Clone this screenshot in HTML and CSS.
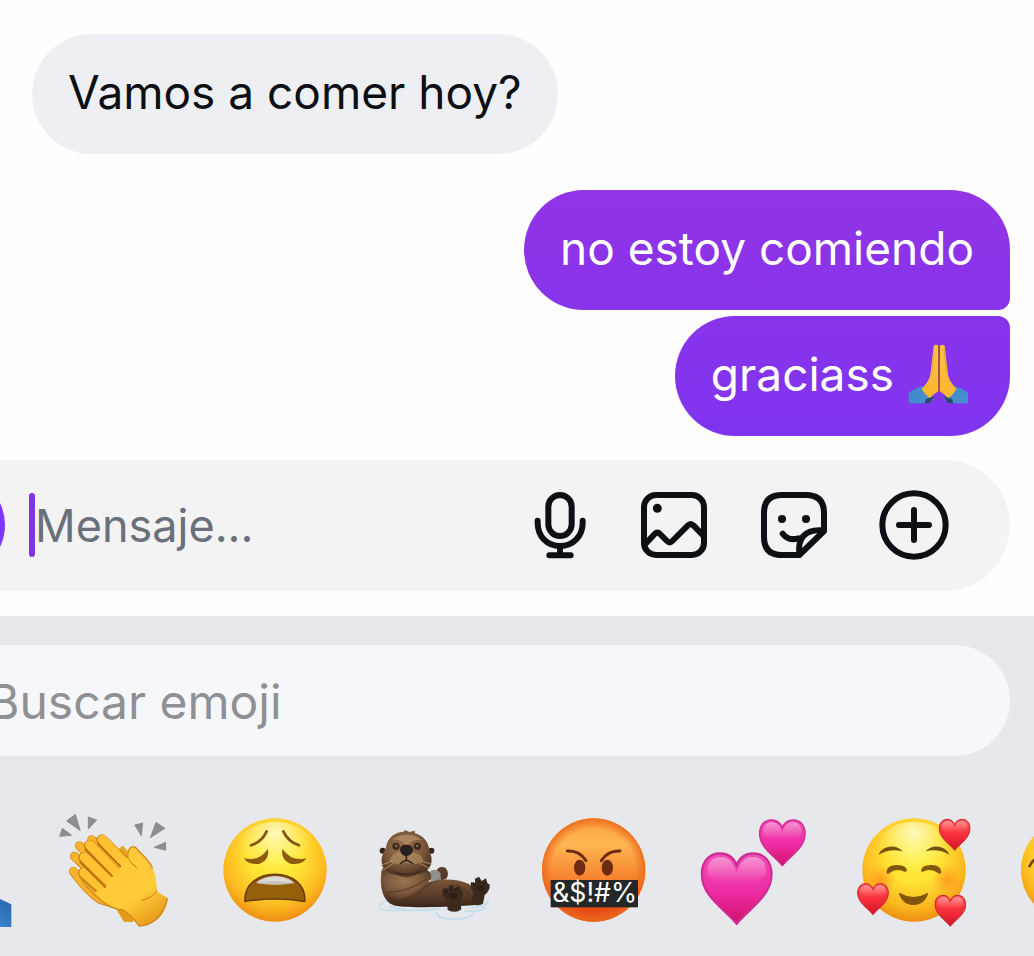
FILE: index.html
```html
<!DOCTYPE html>
<html lang="es">
<head>
<meta charset="utf-8">
<meta name="viewport" content="width=device-width, initial-scale=1">
<title>Chat</title>
<link rel="stylesheet" href="styles.css">
</head>
<body>
<svg class="defs" aria-hidden="true">
  <defs>
    <radialGradient id="face" cx=".5" cy=".36" r=".66">
      <stop offset="0" stop-color="#fff03e"/><stop offset=".4" stop-color="#ffe234"/><stop offset=".75" stop-color="#fcb920"/><stop offset="1" stop-color="#ed8710"/>
    </radialGradient>
    <radialGradient id="shine" cx=".5" cy=".12" r=".4">
      <stop offset="0" stop-color="#fffde0" stop-opacity=".8"/><stop offset="1" stop-color="#fff9a0" stop-opacity="0"/>
    </radialGradient>
    <linearGradient id="rage" x1="0" y1="0" x2="0" y2="1">
      <stop offset="0" stop-color="#fba03c"/><stop offset=".25" stop-color="#fdb653"/><stop offset=".6" stop-color="#f6802b"/><stop offset=".85" stop-color="#e84a16"/><stop offset="1" stop-color="#e5521a"/>
    </linearGradient>
    <radialGradient id="rage-rim" cx=".5" cy=".5" r=".5">
      <stop offset=".8" stop-color="#ee6a1c" stop-opacity="0"/><stop offset="1" stop-color="#ec6a1e" stop-opacity=".9"/>
    </radialGradient>
    <radialGradient id="cheek"><stop offset="0" stop-color="#ff8a1c" stop-opacity=".7"/><stop offset="1" stop-color="#ff9a1c" stop-opacity="0"/></radialGradient>
    <linearGradient id="pink" x1="0" y1="0" x2="0" y2="1">
      <stop offset="0" stop-color="#f24fb6"/><stop offset=".55" stop-color="#ee2ba4"/><stop offset="1" stop-color="#cf1268"/>
    </linearGradient>
    <linearGradient id="red" x1="0" y1="0" x2="0" y2="1">
      <stop offset="0" stop-color="#ff5050"/><stop offset=".5" stop-color="#f92f3d"/><stop offset="1" stop-color="#cc1524"/>
    </linearGradient>
    <linearGradient id="gloss" x1="0" y1="0" x2="0" y2="1">
      <stop offset="0" stop-color="#fff" stop-opacity=".4"/><stop offset="1" stop-color="#fff" stop-opacity="0"/>
    </linearGradient>
    <linearGradient id="hand" gradientUnits="userSpaceOnUse" x1="290" y1="150" x2="450" y2="380">
      <stop offset="0" stop-color="#ffc536"/><stop offset=".65" stop-color="#ffcc38"/><stop offset="1" stop-color="#e6981c"/>
    </linearGradient>
    <linearGradient id="palm" x1="0" y1="0" x2="0" y2="1">
      <stop offset="0" stop-color="#fbc04a"/><stop offset="1" stop-color="#fdb52c"/>
    </linearGradient>
    <linearGradient id="sleeve" x1="0" y1="0" x2="1" y2="1">
      <stop offset="0" stop-color="#3f86c8"/><stop offset="1" stop-color="#4793cf"/>
    </linearGradient>
    <linearGradient id="cuff" x1="1" y1="0" x2="0" y2="1">
      <stop offset="0" stop-color="#1f5cab"/><stop offset="1" stop-color="#4a9be0"/>
    </linearGradient>
    <radialGradient id="fur" cx=".45" cy=".4" r=".65">
      <stop offset="0" stop-color="#9b7450"/><stop offset=".6" stop-color="#7a573b"/><stop offset="1" stop-color="#4a3121"/>
    </radialGradient>
    <linearGradient id="belly" x1="0" y1="0" x2="0" y2="1">
      <stop offset="0" stop-color="#8b6242"/><stop offset=".6" stop-color="#64432d"/><stop offset="1" stop-color="#38251a"/>
    </linearGradient>
    <symbol id="heart-shape" viewBox="0 0 100 100">
      <path d="M50 99C37 81 2 62 2 31C2 12 13 2 27 2C38 2 46 8 50 18C54 8 62 2 73 2C87 2 98 12 98 31C98 62 63 81 50 99Z"/>
    </symbol>
    <symbol id="heart-gloss" viewBox="0 0 100 100">
      <path fill="url(#gloss)" d="M10 31C8 14 17 7 28 7C39 7 46 15 50 28C54 15 61 7 72 7C83 7 92 14 90 31C84 40 68 45 50 43C32 45 16 40 10 31Z"/>
    </symbol>
  </defs>
</svg>

<main class="chat">
  <section class="thread" aria-label="Conversación">
    <p class="bubble bubble-in">Vamos a comer hoy?</p>
    <div class="sent">
      <p class="bubble bubble-out bubble-first">no estoy comiendo</p>
      <p class="bubble bubble-out bubble-last">graciass
        <svg class="inline-emoji" viewBox="50 42 180 180" role="img" aria-label="Manos juntas">
          <path fill="url(#sleeve)" d="M52 188C64 180 78 174 94 168L128 206L118 220H52Z"/>
          <path fill="url(#sleeve)" d="M231 188C219 180 206 174 190 168L158 206L168 220H231Z"/>
          <path fill="#31436f" d="M104 207L129 199L117 220H100ZM182 207L157 199L169 220H186Z"/>
          <path fill="url(#palm)" d="M127 47Q134 42 141 47V184C134 188 126 194 115 204Q100 194 91 177C106 160 113 150 117 134Z"/>
          <path fill="url(#palm)" d="M146 47Q153 42 160 47L170 134C174 150 181 160 196 177Q187 194 171 204C160 194 152 188 146 184Z"/>
          <path fill="none" stroke="#a4560c" stroke-width="4" d="M143.500 48V185"/>
          <path fill="none" stroke="#e59a20" stroke-width="2" d="M129 55L121 134M158 55L166 134"/>
        </svg>
      </p>
    </div>
  </section>

  <form class="composer">
    <button class="camera" type="button" aria-label="Cámara"></button>
    <span class="caret"></span>
    <input class="message" type="text" placeholder="Mensaje..." aria-label="Mensaje">
    <div class="tools">
      <button class="tool" type="button" aria-label="Grabar audio">
        <svg viewBox="-6 58 216 216" fill="none" stroke="#0c1014" stroke-width="18" stroke-linecap="round">
          <rect x="85" y="76" width="70" height="123" rx="35"/>
          <path d="M53 153V160C53 201 82 229 120 229S188 201 188 160V153M120 231V254M88 257H152"/>
        </svg>
      </button>
      <button class="tool" type="button" aria-label="Enviar foto">
        <svg viewBox="354 58 216 216" fill="none" stroke="#0c1014" stroke-width="18" stroke-linejoin="round">
          <rect x="372" y="76" width="180" height="180" rx="36"/>
          <circle cx="412" cy="116" r="13.500" fill="#0c1014" stroke="none"/>
          <path d="M376 223L404 193Q412 185 420 193L441 214Q449 222 457 214L503 168Q512 159 521 168L550 198"/>
        </svg>
      </button>
      <button class="tool" type="button" aria-label="Stickers">
        <svg viewBox="54 58 216 216" fill="none" stroke="#0c1014" stroke-width="18" stroke-linejoin="round" stroke-linecap="round">
          <path d="M178 256H126Q72 256 72 202V130Q72 76 126 76H198Q252 76 252 130V184Z"/>
          <path d="M178 253C173 211 190 177 249 182"/>
          <path d="M128 192C139 208 157 211 175 206"/>
          <circle cx="126" cy="148" r="12" fill="#0c1014" stroke="none"/>
          <circle cx="198" cy="148" r="12" fill="#0c1014" stroke="none"/>
        </svg>
      </button>
      <button class="tool" type="button" aria-label="Más opciones">
        <svg viewBox="414 58 216 216" fill="none" stroke="#0c1014" stroke-width="18" stroke-linecap="round">
          <circle cx="522" cy="166" r="95"/>
          <path d="M522 121V211M477 166H567"/>
        </svg>
      </button>
    </div>
  </form>

  <section class="keyboard" aria-label="Teclado de emojis">
    <input class="search" type="search" placeholder="Buscar emoji" aria-label="Buscar emoji">
    <div class="emojis">
      <button class="emoji" type="button" aria-label="Manos juntas">
        <svg viewBox="-315 33 360 360">
          <path fill="url(#cuff)" d="M-308 315L-225 270L-170 345L-190 381H-308Z"/>
          <path fill="url(#cuff)" d="M34 313L0 297L-49 270L-104 345L-84 381H34Z"/>
          <path fill="url(#palm)" d="M-164 52Q-152 42 -140 52V320L-190 350L-240 300Q-196 240 -190 190ZM-134 52Q-122 42 -110 52L-84 190Q-78 240 -34 300L-84 350L-134 320Z"/>
        </svg>
      </button>
      <button class="emoji" type="button" aria-label="Aplauso">
        <svg viewBox="165 33 360 360">
          <g fill="#8d8e90" stroke="#7b7c80" stroke-width="2">
            <path d="M200 63L226 43L241 92ZM265 51L290 60L265 87ZM187 85L215 106L179 109ZM404 75L428 69L424 107ZM468 67L495 85L451 113ZM497 127V151L462 142Z"/>
          </g>
          <path fill="#e59a18" d="M345 322L372 365L398 367L410 340Z"/>
          <path fill="#eba321" d="M358 160Q354 140 370 138L392 165L400 240Z"/>
          <g fill="none" stroke-linecap="round">
            <g stroke="#cf8516" stroke-width="27">
              <path d="M275 119L380 230M238 137L360 260M223 169L350 290M220 214Q262 272 300 298L345 312"/>
            </g>
            <g stroke="#f8b22c" stroke-width="23">
              <path d="M275 119L380 230M238 137L370 270M223 169L360 290M220 214Q262 272 300 297L345 310"/>
            </g>
            <path stroke="#c57d14" stroke-width="34" d="M251 219L330 296"/>
            <path stroke="#ffc233" stroke-width="29" d="M252 218L340 296"/>
            <path stroke="#c57d14" stroke-width="34" d="M252 173L330 248"/>
            <path stroke="#ffc233" stroke-width="29" d="M253 172L350 266"/>
            <path stroke="#c57d14" stroke-width="34" d="M269 136L345 216"/>
            <path stroke="#ffc233" stroke-width="29" d="M270 135L370 240"/>
            <path stroke="#c57d14" stroke-width="34" d="M306 120L370 184"/>
            <path stroke="#ffc233" stroke-width="29" d="M307 119L390 205"/>
          </g>
          <path fill="url(#hand)" d="M314 262L338 228L362 200L382 174C379 149 391 134 407 141C420 158 449 181 457 204C469 226 468 250 473 276L503 294C500 340 468 375 418 379C400 363 388 342 369 330C340 326 308 308 285 276Z"/>
          <path fill="none" stroke="#c57d14" stroke-width="3" d="M385 176Q391 190 412 204M470 274Q454 294 424 302"/>
          <g fill="none" stroke="#b96d0d" stroke-width="5" stroke-linecap="round">
            <path d="M294 132L361 199M256 149L336 228M240 186L316 262"/>
          </g>
          <path fill="none" stroke="#d18b1a" stroke-width="4" stroke-linecap="round" d="M240 232C276 283 322 327 369 330Q391 342 418 378Q481 374 502 297M384 174C381 148 392 135 407 142C421 160 450 182 457 204"/>
        </svg>
      </button>
      <button class="emoji" type="button" aria-label="Cara agotada">
        <svg viewBox="15 33 360 360">
          <circle cx="195" cy="210" r="155" fill="url(#face)"/>
          <circle cx="195" cy="210" r="145" fill="url(#shine)"/>
          <path fill="none" stroke="#80500c" stroke-width="8" stroke-linecap="round" d="M123 136Q155 126 170 94M267 136Q235 126 220 94"/>
          <path fill="#8f5b10" d="M102 175Q148 185 173 147C181 170 160 194 136 192Q112 192 102 175ZM289 175Q243 185 218 147C210 170 231 194 255 192Q279 192 289 175Z"/>
          <path fill="#946009" stroke="#6d3d0d" stroke-width="5" stroke-linejoin="round" d="M105 304C102 255 143 223 195 223S288 255 284 304Q195 290 105 304Z"/>
          <path fill="#dedad6" d="M138 249C165 222 226 222 253 249Q195 260 138 249Z"/>
          <path fill="#b9aa9a" opacity=".5" d="M138 249Q195 238 253 249Q195 262 138 249Z"/>
        </svg>
      </button>
      <button class="emoji" type="button" aria-label="Nutria">
        <svg viewBox="30 3 360 360">
          <g fill="none" stroke="#c6dfea" stroke-width="6" stroke-linecap="round">
            <path d="M60 274Q38 284 46 294T100 301H205M215 309Q218 326 260 328T325 312M72 289Q130 307 225 296M320 292Q365 290 370 274M300 303Q345 307 360 294"/>
          </g>
          <path fill="url(#belly)" d="M50 181C40 244 62 281 90 287C140 295 270 291 327 285L342 262L312 222C270 202 220 207 185 217L176 176Z"/>
          <path fill="#5a3b28" d="M215 181Q224 166 242 174Q256 192 242 208L212 214Z"/>
          <path fill="#8e908f" d="M190 188Q210 171 226 188L228 211L199 216Z"/>
          <path fill="url(#fur)" d="M52 175C42 226 67 261 98 271C142 257 173 232 198 207Q202 191 187 180Z"/>
          <circle cx="53" cy="122" r="9" fill="#33241c"/><circle cx="199" cy="122" r="9" fill="#33241c"/>
          <path fill="url(#fur)" d="M63 112C67 80 94 65 116 65L120 60L133 66L149 62L150 70C180 78 192 102 194 126C210 159 193 190 151 193C105 199 52 198 50 155C48 139 57 128 63 112Z"/>
          <path fill="#c09a6e" opacity=".6" d="M83 89C99 72 145 66 171 91C151 88 139 93 127 106Q105 86 83 89Z"/>
          <path fill="#c09c70" opacity=".5" d="M121 130C95 120 78 137 74 151C83 166 107 162 122 158C137 164 166 166 175 151C172 134 149 123 121 130Z"/>
          <circle cx="93" cy="109" r="11" fill="#3e2b1c"/><circle cx="157" cy="109" r="11" fill="#3e2b1c"/>
          <circle cx="94" cy="108" r="4" fill="#866a48"/><circle cx="156" cy="108" r="4" fill="#866a48"/>
          <path fill="#28201d" d="M105 119Q105 104 124 104T144 119Q143 134 126 138H120Q106 132 105 119Z"/>
          <path fill="none" stroke="#37251a" stroke-width="5" stroke-linecap="round" d="M124 137V149M106 161Q118 151 124 151T143 161"/>
          <path fill="#3a271c" opacity=".65" d="M82 181Q125 199 169 181Q145 209 105 199Z"/>
          <path fill="none" stroke="#d1b08a" stroke-width="2" d="M82 153L47 166M85 160L53 181M166 153L204 163M164 160L197 177"/>
          <path fill="none" stroke="#452d1f" stroke-width="5" opacity=".5" d="M67 246Q130 248 186 206M156 254Q184 220 225 210M270 225Q305 230 315 266"/>
          <g fill="#3c291e">
            <path d="M248 300L246 272C229 260 228 241 239 232L251 237L252 226L265 225L268 235L281 228L292 243Q298 256 286 274L289 298Q272 312 248 300ZM319 281L325 247Q311 230 319 216L330 218V206L342 200L350 213L363 205L367 219L374 224Q376 241 359 255L354 281Q337 290 319 281Z"/>
          </g>
          <g fill="#2a1e17">
            <ellipse cx="265" cy="257" rx="12" ry="9"/><ellipse cx="347" cy="235" rx="12" ry="9"/>
            <circle cx="245" cy="244" r="4"/><circle cx="258" cy="237" r="4"/><circle cx="273" cy="239" r="4"/><circle cx="328" cy="224" r="4"/><circle cx="342" cy="215" r="4"/><circle cx="360" cy="219" r="4"/>
          </g>
        </svg>
      </button>
      <button class="emoji" type="button" aria-label="Cara maldiciendo">
        <svg viewBox="15 33 360 360">
          <circle cx="191" cy="210" r="155" fill="url(#rage)"/>
          <circle cx="191" cy="210" r="155" fill="url(#rage-rim)"/>
          <ellipse cx="149" cy="203" rx="17" ry="24" fill="#6c2c14"/><ellipse cx="232" cy="203" rx="17" ry="24" fill="#6c2c14"/>
          <path fill="none" stroke="#702a10" stroke-width="9" stroke-linecap="round" d="M112 153Q148 151 168 182M270 153Q234 151 214 182"/>
          <rect x="62" y="240" width="262" height="82" fill="#242727"/>
          <text class="swear" x="194" y="306" text-anchor="middle">&amp;$!#%</text>
        </svg>
      </button>
      <button class="emoji" type="button" aria-label="Dos corazones">
        <svg viewBox="15 33 360 360">
          <g fill="url(#pink)" stroke="#cf2b94" stroke-width="3">
            <use href="#heart-shape" x="31" y="155" width="218" height="220"/>
            <use href="#heart-shape" x="206" y="57" width="142" height="142"/>
          </g>
          <use href="#heart-gloss" x="31" y="155" width="218" height="220"/>
          <use href="#heart-gloss" x="206" y="57" width="142" height="142"/>
        </svg>
      </button>
      <button class="emoji" type="button" aria-label="Cara con corazones">
        <svg viewBox="30 33 360 360">
          <circle cx="207" cy="210" r="155" fill="url(#face)"/>
          <circle cx="207" cy="210" r="145" fill="url(#shine)"/>
          <circle cx="107" cy="240" r="46" fill="url(#cheek)"/><circle cx="307" cy="240" r="46" fill="url(#cheek)"/>
          <path fill="#77500f" d="M101 164C112 137 154 131 173 154Q135 145 101 164ZM313 164C302 137 261 131 242 154Q280 145 313 164Z"/>
          <path fill="#83570e" d="M124 218Q124 195 155 195T186 213Q180 218 172 212Q151 205 134 219Q128 224 124 218ZM228 213Q228 195 259 195T289 218Q285 224 279 219Q260 205 240 212Q233 218 228 213Z"/>
          <path fill="#83550d" d="M162 281Q163 276 169 281Q206 301 243 281Q249 276 249 282C242 303 227 315 206 315S169 303 162 281Z"/>
          <g fill="url(#red)" stroke="#c41f30" stroke-width="3">
            <use href="#heart-shape" x="36" y="248" width="96" height="98"/>
            <use href="#heart-shape" x="268" y="283" width="96" height="98"/>
            <use href="#heart-shape" x="281" y="55" width="96" height="98"/>
          </g>
          <use href="#heart-gloss" x="36" y="248" width="96" height="98"/>
          <use href="#heart-gloss" x="268" y="283" width="96" height="98"/>
          <use href="#heart-gloss" x="281" y="55" width="96" height="98"/>
        </svg>
      </button>
      <button class="emoji" type="button" aria-label="Cara sonriente">
        <svg viewBox="510 33 360 360">
          <circle cx="683" cy="210" r="155" fill="url(#face)"/>
          <path fill="none" stroke="#6b430c" stroke-width="8" stroke-linecap="round" d="M554 198Q564 174 590 170"/>
        </svg>
      </button>
    </div>
  </section>
</main>
</body>
</html>
```
FILE: styles.css
```css
* {
  box-sizing: border-box;
}

body {
  margin: 0;
  background: #fefefe;
  color: #0c1014;
  font-family: Inter, "Liberation Sans", sans-serif;
}

button {
  padding: 0;
  border: 0;
  background: none;
}

svg {
  display: block;
}

.defs {
  position: absolute;
  width: 0;
  height: 0;
}

.chat {
  display: flex;
  flex-direction: column;
  min-height: 100vh;
  overflow: hidden;
}

.thread {
  display: flex;
  flex-direction: column;
  gap: 36px;
  padding: 34px 24px 24px 32px;
}

.sent {
  display: flex;
  flex-direction: column;
  align-items: flex-end;
  gap: 6px;
}

.bubble {
  display: flex;
  align-items: center;
  gap: 14px;
  margin: 0;
  padding: 30px 36px 34px;
  border-radius: 60px;
  font-size: 46px;
  line-height: 56px;
}

.bubble-in {
  align-self: flex-start;
  background: #eeeff3;
}

.bubble-out {
  color: #fff;
}

.bubble-first {
  border-bottom-right-radius: 12px;
  background: linear-gradient(#9233e6, #8834eb);
}

.bubble-last {
  padding-right: 42px;
  border-top-right-radius: 12px;
  background: linear-gradient(#8834eb, #8034ef);
}

.inline-emoji {
  width: 60px;
  height: 60px;
  margin: -2px 0;
}

.composer {
  display: flex;
  align-items: center;
  margin: 0 24px 0 -109px;
  padding: 14px 60px 15px 12px;
  border-radius: 66px;
  background: #f3f3f4;
}

.camera {
  flex: none;
  width: 102px;
  height: 102px;
  border-radius: 50%;
  background: #7f35fb;
}

.caret {
  flex: none;
  width: 6px;
  height: 64px;
  margin-left: 24px;
  border-radius: 3px;
  background: #8035e0;
}

.message,
.search {
  border: 0;
  outline: 0;
  background: none;
  color: inherit;
  font-family: inherit;
}

.message {
  flex: 1;
  min-width: 0;
  height: 64px;
  padding: 0;
  font-size: 45px;
}

.message::placeholder {
  color: #6a7079;
  opacity: 1;
}

.tools {
  display: flex;
  gap: 48px;
}

.tool svg {
  width: 72px;
  height: 72px;
}

.keyboard {
  display: flex;
  flex: 1;
  flex-direction: column;
  margin-top: 25px;
  padding: 29px 0 25px;
  background: #e7e8ec;
}

.search {
  height: 111px;
  margin: 0 24px 0 -100px;
  padding: 2px 56px 0 88px;
  border-radius: 56px;
  background: #f6f7fb;
  font-size: 48px;
}

.search::placeholder {
  color: #8f9094;
  opacity: 1;
}

.emojis {
  display: flex;
  justify-content: center;
  gap: 40px;
  margin-top: 55px;
  padding-right: 4px;
}

.emoji {
  flex: none;
}

.emoji svg {
  width: 120px;
  height: 120px;
}

.swear {
  fill: #fff;
  font-family: Inter, "Liberation Sans", sans-serif;
  font-size: 80px;
}
```
